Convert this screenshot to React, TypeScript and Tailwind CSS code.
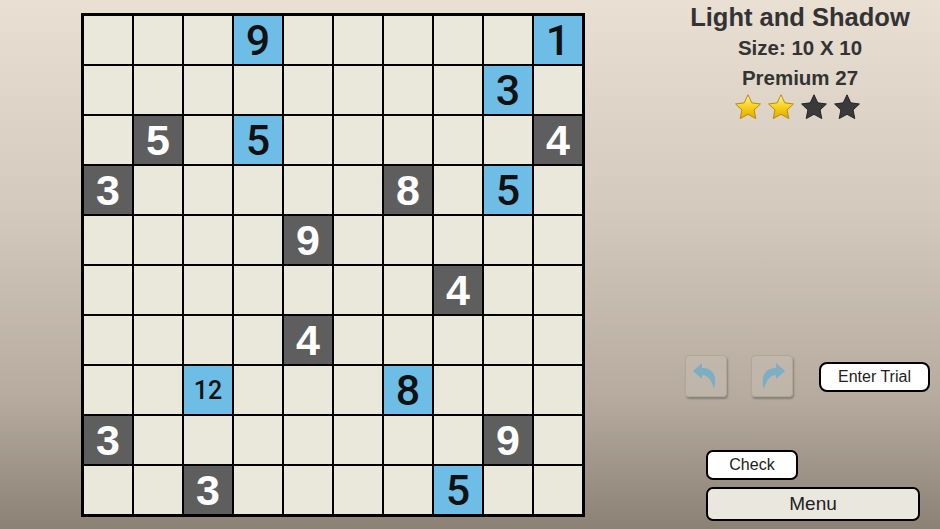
import React from 'react';

type Cell = { v: string; kind: 'blue' | 'dark' } | null;

const clues: Record<string, { v: string; kind: 'blue' | 'dark' }> = {
  '0-3': { v: '9', kind: 'blue' },
  '0-9': { v: '1', kind: 'blue' },
  '1-8': { v: '3', kind: 'blue' },
  '2-1': { v: '5', kind: 'dark' },
  '2-3': { v: '5', kind: 'blue' },
  '2-9': { v: '4', kind: 'dark' },
  '3-0': { v: '3', kind: 'dark' },
  '3-6': { v: '8', kind: 'dark' },
  '3-8': { v: '5', kind: 'blue' },
  '4-4': { v: '9', kind: 'dark' },
  '5-7': { v: '4', kind: 'dark' },
  '6-4': { v: '4', kind: 'dark' },
  '7-2': { v: '12', kind: 'blue' },
  '7-6': { v: '8', kind: 'blue' },
  '8-0': { v: '3', kind: 'dark' },
  '8-8': { v: '9', kind: 'dark' },
  '9-2': { v: '3', kind: 'dark' },
  '9-7': { v: '5', kind: 'blue' },
};

const Star = ({ gold }: { gold: boolean }) => (
  <svg width="30" height="28" viewBox="0 0 24 23">
    <defs>
      <linearGradient id="gold" x1="0" y1="0" x2="0" y2="1">
        <stop offset="0" stopColor="#fff3a0" />
        <stop offset="0.5" stopColor="#f7d21c" />
        <stop offset="1" stopColor="#e2a800" />
      </linearGradient>
    </defs>
    <path
      d="M12 1.5l3.1 6.6 7.1.9-5.2 4.9 1.4 7.1L12 17.5l-6.4 3.5L7 13.9 1.8 9l7.1-.9z"
      fill={gold ? 'url(#gold)' : '#3a3a3a'}
      stroke={gold ? '#b88a00' : '#222'}
      strokeWidth="0.8"
      strokeLinejoin="round"
    />
  </svg>
);

const ArrowBtn = ({ flip }: { flip?: boolean }) => (
  <div className="w-[42px] h-[42px] rounded-[4px] bg-[#c4bbb0]/60 border border-[#b0a79b] shadow-[1px_2px_2px_rgba(0,0,0,0.25)] flex items-center justify-center">
    <svg width="30" height="32" viewBox="0 0 30 32" style={{ transform: flip ? 'scaleX(-1)' : undefined }}>
      <path
        d="M2 11 L11 3 L11 8 C21 8 27 15 23 29 C21 21 17 15 11 15 L11 19 Z"
        fill="#6aaccb"
        opacity="0.8"
      />
    </svg>
  </div>
);

export default function App() {
  const rows = Array.from({ length: 10 }, (_, r) => r);
  const cols = Array.from({ length: 10 }, (_, c) => c);

  return (
    <div
      className="w-[940px] h-[529px] overflow-hidden flex bg-[linear-gradient(180deg,#e9dfd3_0%,#d3c9bc_40%,#b6ab9e_75%,#8c8175_100%)]"
      style={{ fontFamily: '"Liberation Sans", Arial, sans-serif' }}
    >
      <div className="ml-[81px] mt-[13px] w-[504px] h-[504px] border-[3px] border-black bg-black grid grid-cols-10 gap-[2px] shrink-0">
        {rows.map((r) =>
          cols.map((c) => {
            const cell: Cell = clues[`${r}-${c}`] ?? null;
            const bg = !cell ? 'bg-[#e9e8da]' : cell.kind === 'blue' ? 'bg-[#6dbde6]' : 'bg-[#5e5e5e]';
            const txt = !cell
              ? ''
              : cell.kind === 'blue'
              ? 'text-[#111] font-medium font-[Roboto]'
              : 'text-white font-bold';
            const size = cell && cell.v.length > 1 ? 'text-[25px]' : 'text-[43px]';
            return (
              <div key={`${r}-${c}`} className={`${bg} flex items-center justify-center`}>
                {cell && <span className={`${txt} ${size} leading-none`}>{cell.v}</span>}
              </div>
            );
          })
        )}
      </div>

      <div className="flex-1 flex flex-col">
        <div className="ml-[74px] w-[282px] flex flex-col items-center text-[#333] font-bold">
          <div className="mt-[2px] text-[25.5px] leading-[30px]">Light and Shadow</div>
          <div className="mt-[2px] text-[20.5px] leading-[28px]">Size: 10 X 10</div>
          <div className="mt-[2px] text-[20.5px] leading-[28px]">Premium 27</div>
          <div className="flex gap-[3px] mt-[1px] mr-[6px]">
            <Star gold />
            <Star gold />
            <Star gold={false} />
            <Star gold={false} />
          </div>
        </div>

        <div className="mt-[234px] flex items-center">
          <div className="ml-[100px]">
            <ArrowBtn />
          </div>
          <div className="ml-[24px]">
            <ArrowBtn flip />
          </div>
          <button className="ml-[26px] mt-[2px] w-[111px] h-[30px] bg-white border-2 border-black rounded-[8px] text-[16px] text-[#222]">
            Enter Trial
          </button>
        </div>

        <div className="mt-[53px] ml-[121px] flex flex-col gap-[7px]">
          <button className="w-[92px] h-[30px] bg-white border-2 border-black rounded-[7px] text-[16px] text-[#222]">
            Check
          </button>
          <button className="w-[214px] h-[34px] bg-[#e9e7de] border-2 border-black rounded-[7px] text-[19px] text-[#222]">
            Menu
          </button>
        </div>
      </div>
    </div>
  );
}
